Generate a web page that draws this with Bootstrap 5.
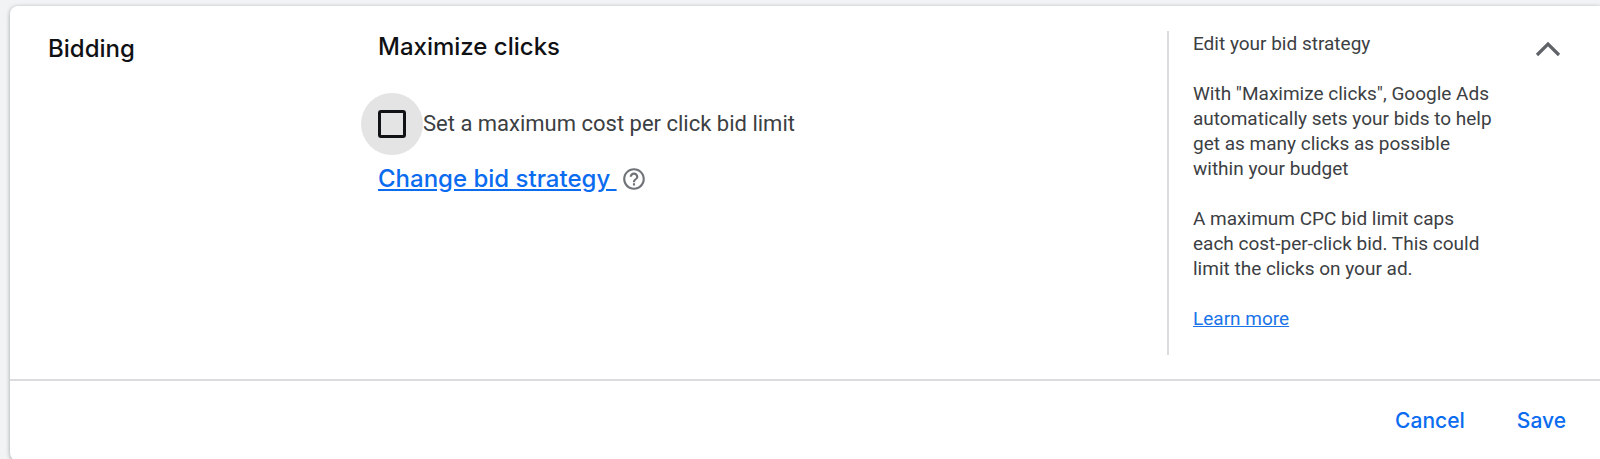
<!DOCTYPE html>
<html lang="en">
<head>
<meta charset="utf-8">
<meta name="viewport" content="width=device-width, initial-scale=1">
<title>Bidding</title>
<link href="https://cdn.jsdelivr.net/npm/bootstrap@5.3.0/dist/css/bootstrap.min.css" rel="stylesheet">
<script src="https://cdn.jsdelivr.net/npm/bootstrap@5.3.0/dist/js/bootstrap.bundle.min.js" defer></script>
<style>
  body { background: #f1f3f4; font-family: Roboto, "Liberation Sans", sans-serif; color: #3c4043; }
  .panel { margin: 6px 0 0 10px; border-radius: 8px 0 0 8px; box-shadow: 0 1px 4px rgba(60,64,67,.45); }
  .panel-main { padding: 25px 32px 24px 38px; }
  .panel-title { width: 330px; padding-top: 2px; }
  .heading { font: 500 24px/32px Inter, sans-serif; color: #101114; margin: 0; }
  .tick-row { margin: 30px 0 8px -17px; }
  .ripple { width: 62px; height: 62px; background: #e4e4e4; }
  .ripple .form-check-input { width: 28px; height: 28px; border: 3px solid #111216; border-radius: 3px; background-color: transparent; }
  .tick-label { font-size: 22px; line-height: 32px; }
  .change-link { font: 500 24px/32px Inter, sans-serif; color: #0b6cf0; white-space: pre; }
  .help-btn { margin-left: 4px; }
  .hints { width: 344px; padding: 0 15px 24px 24px; border-left: 2px solid #dadce0; font-size: 19px; line-height: 25px; }
  .hints p { margin: 0 0 25px; }
  .hints a { color: #1a73e8; }
  .collapse-btn { width: 40px; height: 36px; margin-left: 17px; }
  .panel-actions { border-top: 2px solid #dadce0; padding: 20px 26px 20px 0; gap: 36px; }
  .action { font: 500 21px/24px Inter, sans-serif; color: #0b6cf0; padding: 8px; border: 0; }
</style>
</head>
<body>
<section class="panel bg-white">
  <div class="panel-main d-flex align-items-start">
    <div class="panel-title flex-shrink-0"><h2 class="heading">Bidding</h2></div>
    <div class="flex-grow-1">
      <h3 class="heading">Maximize clicks</h3>
      <div class="tick-row d-flex align-items-center">
        <span class="ripple rounded-circle d-flex align-items-center justify-content-center flex-shrink-0">
          <input class="form-check-input m-0" type="checkbox" id="bidLimit">
        </span>
        <label class="tick-label" for="bidLimit">Set a maximum cost per click bid limit</label>
      </div>
      <div class="d-flex align-items-center">
        <a class="change-link" href="#">Change bid strategy </a>
        <button class="help-btn btn p-0 border-0 d-flex" type="button" aria-label="Help">
          <svg width="26" height="26" viewBox="0 0 24 24" fill="#6f7276" aria-hidden="true"><path d="M11 18h2v-2h-2v2zm1-16C6.480 2 2 6.480 2 12s4.480 10 10 10 10-4.480 10-10S17.520 2 12 2zm0 18c-4.410 0-8-3.590-8-8s3.590-8 8-8 8 3.590 8 8-3.590 8-8 8zm0-14c-2.210 0-4 1.790-4 4h2c0-1.100.9-2 2-2s2 .9 2 2c0 2-3 1.750-3 5h2c0-2.250 3-2.500 3-5 0-2.210-1.790-4-4-4z"/></svg>
        </button>
      </div>
    </div>
    <aside class="hints flex-shrink-0">
      <p>Edit your bid strategy</p>
      <p>With "Maximize clicks", Google Ads automatically sets your bids to help get as many clicks as possible within your budget</p>
      <p>A maximum CPC bid limit caps each cost-per-click bid. This could limit the clicks on your ad.</p>
      <a href="#">Learn more</a>
    </aside>
    <button class="collapse-btn btn p-0 border-0 flex-shrink-0 d-flex align-items-center justify-content-center" type="button" aria-label="Collapse">
      <svg width="26" height="16" viewBox="0 0 26 16" fill="none" stroke="#5f6368" stroke-width="3.200" aria-hidden="true"><path d="M2 14 13 3l11 11"/></svg>
    </button>
  </div>
  <div class="panel-actions d-flex justify-content-end">
    <button class="action btn" type="button">Cancel</button>
    <button class="action btn" type="button">Save</button>
  </div>
</section>
</body>
</html>
